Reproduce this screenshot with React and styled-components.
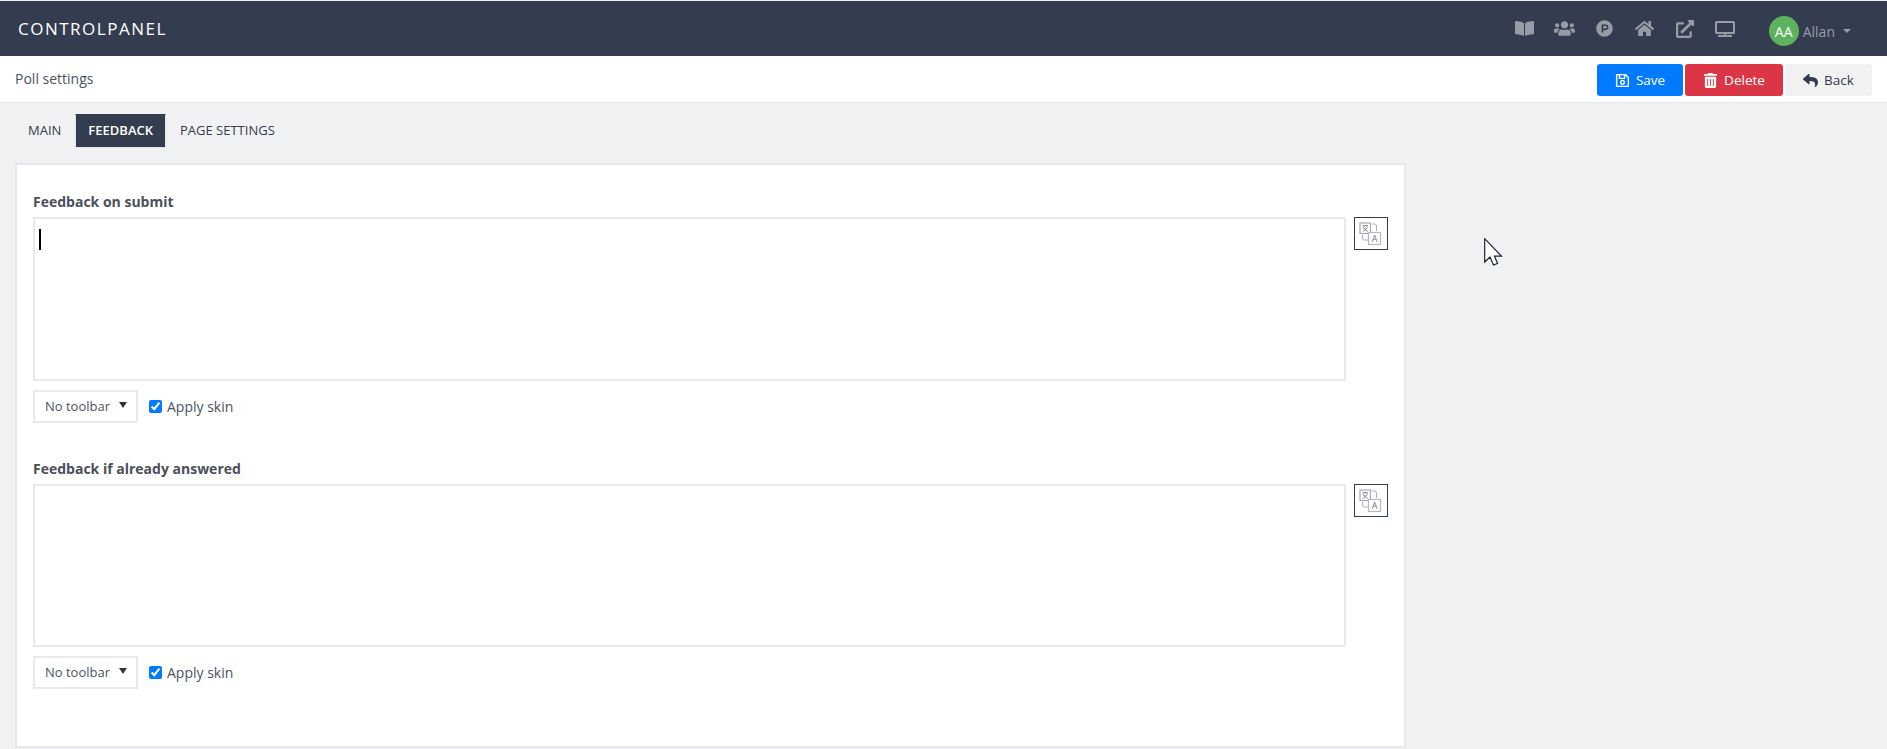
import styled, { createGlobalStyle } from "styled-components";
import {
  FaBookOpen,
  FaUsers,
  FaProductHunt,
  FaHome,
  FaExternalLinkAlt,
  FaTv,
  FaRegSave,
  FaTrashAlt,
  FaReply,
} from "react-icons/fa";

const GlobalStyle = createGlobalStyle`
  html, body {
    margin: 0;
    padding: 0;
    background: #f0f1f3;
    overflow: hidden;
  }
  * {
    box-sizing: border-box;
  }
  body {
    font-family: "Open Sans", "Liberation Sans", sans-serif;
    font-size: 13px;
    color: #343d4e;
  }
`;

function TranslateIcon() {
  return (
    <svg width="24" height="24" viewBox="0 0 24 24" fill="none">
      <rect x="1" y="1" width="10.5" height="10.5" fill="#fff" stroke="#a4a9b6" strokeWidth="1.2" />
      <path d="M3.5 3.8h5.5M6.2 3v1M4 5.2l4.5 4.5M8.5 5.2L4 9.7" stroke="#6f7685" strokeWidth="1" />
      <path d="M13 2h2.5a2 2 0 0 1 2 2v5" stroke="#a9aeb9" strokeWidth="1" />
      <path d="M3.5 13v3a2 2 0 0 0 2 2h3.5" stroke="#a9aeb9" strokeWidth="1" />
      <rect x="9.5" y="10.5" width="12" height="12" fill="#fff" stroke="#b4b9c3" strokeWidth="1.2" />
      <text x="15.5" y="20" textAnchor="middle" fontSize="9" fill="#6f7685" fontFamily="Open Sans">
        A
      </text>
    </svg>
  );
}

function Cursor() {
  return (
    <CursorMark width="19" height="28" viewBox="0 0 19 28">
      <path
        d="M.7.7V24l5.3-5 3.5 8 4-1.5-3-7.3h7z"
        fill="#fff"
        stroke="#1d2430"
        strokeWidth="1.2"
      />
    </CursorMark>
  );
}

function EditorBlock({ label, focused, height }) {
  return (
    <Field>
      <FieldLabel>{label}</FieldLabel>
      <EditorRow>
        <Editor $height={height}>{focused && <Caret />}</Editor>
        <TranslateButton aria-label="Translate">
          <TranslateIcon />
        </TranslateButton>
      </EditorRow>
      <OptionsRow>
        <ToolbarSelect>
          No toolbar
          <SelectArrow />
        </ToolbarSelect>
        <SkinLabel>
          <SkinCheckbox type="checkbox" defaultChecked />
          Apply skin
        </SkinLabel>
      </OptionsRow>
    </Field>
  );
}

export default function App() {
  return (
    <Page>
      <GlobalStyle />
      <TopBar>
        <Brand>CONTROLPANEL</Brand>
        <TopIcons>
          <IconSlot $size={19}><FaBookOpen /></IconSlot>
          <IconSlot $size={21}><FaUsers /></IconSlot>
          <IconSlot $size={17}><FaProductHunt /></IconSlot>
          <IconSlot $size={19}><FaHome /></IconSlot>
          <IconSlot $size={18}><FaExternalLinkAlt /></IconSlot>
          <IconSlot $size={20}><FaTv /></IconSlot>
        </TopIcons>
        <UserMenu>
          <Avatar>AA</Avatar>
          <UserName>Allan</UserName>
          <UserCaret />
        </UserMenu>
      </TopBar>
      <SubBar>
        <PageTitle>Poll settings</PageTitle>
        <Actions>
          <ActionButton $bg="#007bff" $fg="#fff" $width={86}>
            <FaRegSave /> Save
          </ActionButton>
          <ActionButton $bg="#dc3545" $fg="#fff" $width={98}>
            <FaTrashAlt /> Delete
          </ActionButton>
          <ActionButton $bg="#f1f1f2" $fg="#343d4e" $width={87}>
            <FaReply /> Back
          </ActionButton>
        </Actions>
      </SubBar>
      <Tabs>
        <Tab>MAIN</Tab>
        <Tab $active>FEEDBACK</Tab>
        <Tab>PAGE SETTINGS</Tab>
      </Tabs>
      <Card>
        <EditorBlock label="Feedback on submit" focused height={164} />
        <EditorBlock label="Feedback if already answered" height={163} />
      </Card>
      <Cursor />
    </Page>
  );
}

const Page = styled.div`
  position: relative;
  height: 749px;
  overflow: hidden;
  background: #f0f1f3;
`;

const TopBar = styled.header`
  display: flex;
  align-items: center;
  height: 55px;
  margin-top: 1px;
  padding: 0 36px 0 18px;
  background: #343d50;
  color: #fff;
`;

const Brand = styled.div`
  font-size: 17px;
  font-weight: 500;
  letter-spacing: 1.5px;
  margin-right: auto;
`;

const TopIcons = styled.div`
  display: flex;
  align-items: center;
  margin-right: 24px;
`;

const IconSlot = styled.span`
  display: flex;
  justify-content: center;
  width: 40px;
  color: #979ca6;
  font-size: ${(p) => p.$size}px;
`;

const UserMenu = styled.div`
  display: flex;
  align-items: center;
  margin-top: 5px;
`;

const Avatar = styled.div`
  display: flex;
  align-items: center;
  justify-content: center;
  width: 30px;
  height: 30px;
  border-radius: 50%;
  background: #5cb25d;
  color: #fff;
  font-size: 14px;
`;

const UserName = styled.span`
  margin-left: 4px;
  font-size: 14px;
  color: #979ca6;
`;

const UserCaret = styled.span`
  margin-left: 8px;
  border-top: 4px solid #979ca6;
  border-left: 4px solid transparent;
  border-right: 4px solid transparent;
`;

const SubBar = styled.div`
  display: flex;
  align-items: center;
  justify-content: space-between;
  height: 47px;
  padding: 2px 15px 0 15px;
  background: #fff;
  border-bottom: 1px solid #e6e7eb;
`;

const PageTitle = styled.div`
  margin-top: -3px;
  font-size: 14px;
  color: #4b5362;
`;

const Actions = styled.div`
  display: flex;
  gap: 2px;
`;

const ActionButton = styled.button`
  display: flex;
  align-items: center;
  justify-content: center;
  gap: 6px;
  width: ${(p) => p.$width}px;
  height: 32px;
  padding: 0;
  border: 0;
  border-radius: 3px;
  background: ${(p) => p.$bg};
  color: ${(p) => p.$fg};
  font-family: inherit;
  font-size: 13.5px;
  svg {
    font-size: 15px;
  }
`;

const Tabs = styled.nav`
  display: flex;
  gap: 1px;
  height: 60px;
  padding: 11px 0 0 15px;
`;

const Tab = styled.div`
  display: flex;
  align-items: center;
  height: 34px;
  padding: 0 12px 2px;
  font-size: 13px;
  font-weight: ${(p) => (p.$active ? 600 : 500)};
  color: ${(p) => (p.$active ? "#fff" : "#343d4e")};
  background: ${(p) => (p.$active ? "#343d50" : "transparent")};
  border: 1px solid ${(p) => (p.$active ? "#e3e4e8" : "transparent")};
  border-top-color: ${(p) => (p.$active ? "#343d50" : "transparent")};
`;

const Card = styled.section`
  display: flex;
  flex-direction: column;
  gap: 37px;
  width: 1391px;
  height: 585px;
  margin-left: 15px;
  padding: 28px 16px 0 16px;
  background: #fff;
  border: 2px solid #e8e9ed;
`;

const Field = styled.div`
  display: flex;
  flex-direction: column;
`;

const FieldLabel = styled.div`
  height: 24px;
  font-size: 14px;
  line-height: 18px;
  font-weight: 700;
  color: #4a4f5a;
`;

const EditorRow = styled.div`
  display: flex;
  align-items: flex-start;
  gap: 8px;
`;

const Editor = styled.div`
  flex: 1;
  height: ${(p) => p.$height}px;
  padding: 10px 5px;
  background: #fff;
  border: 2px solid #e8e9ed;
`;

const Caret = styled.div`
  width: 2px;
  height: 21px;
  margin-left: -1px;
  background: #000;
`;

const TranslateButton = styled.button`
  display: flex;
  align-items: center;
  justify-content: center;
  width: 34px;
  height: 33px;
  padding: 0;
  background: #fff;
  border: 1px solid #343d50;
`;

const OptionsRow = styled.div`
  display: flex;
  align-items: center;
  gap: 11px;
  margin-top: 9px;
`;

const ToolbarSelect = styled.div`
  display: flex;
  align-items: center;
  justify-content: space-between;
  width: 105px;
  height: 33px;
  padding: 0 9px 1px 10px;
  border: 2px solid #e8e9ed;
  font-size: 13px;
  color: #4b5362;
`;

const SelectArrow = styled.span`
  margin-bottom: 2px;
  border-top: 6px solid #343434;
  border-left: 4px solid transparent;
  border-right: 4px solid transparent;
`;

const SkinLabel = styled.label`
  display: flex;
  align-items: center;
  gap: 5px;
  font-size: 14px;
  color: #4b5362;
`;

const SkinCheckbox = styled.input`
  width: 13px;
  height: 13px;
  margin: 0 0 1px;
  accent-color: #007bff;
`;

const CursorMark = styled.svg`
  position: absolute;
  left: 1484px;
  top: 238px;
`;
